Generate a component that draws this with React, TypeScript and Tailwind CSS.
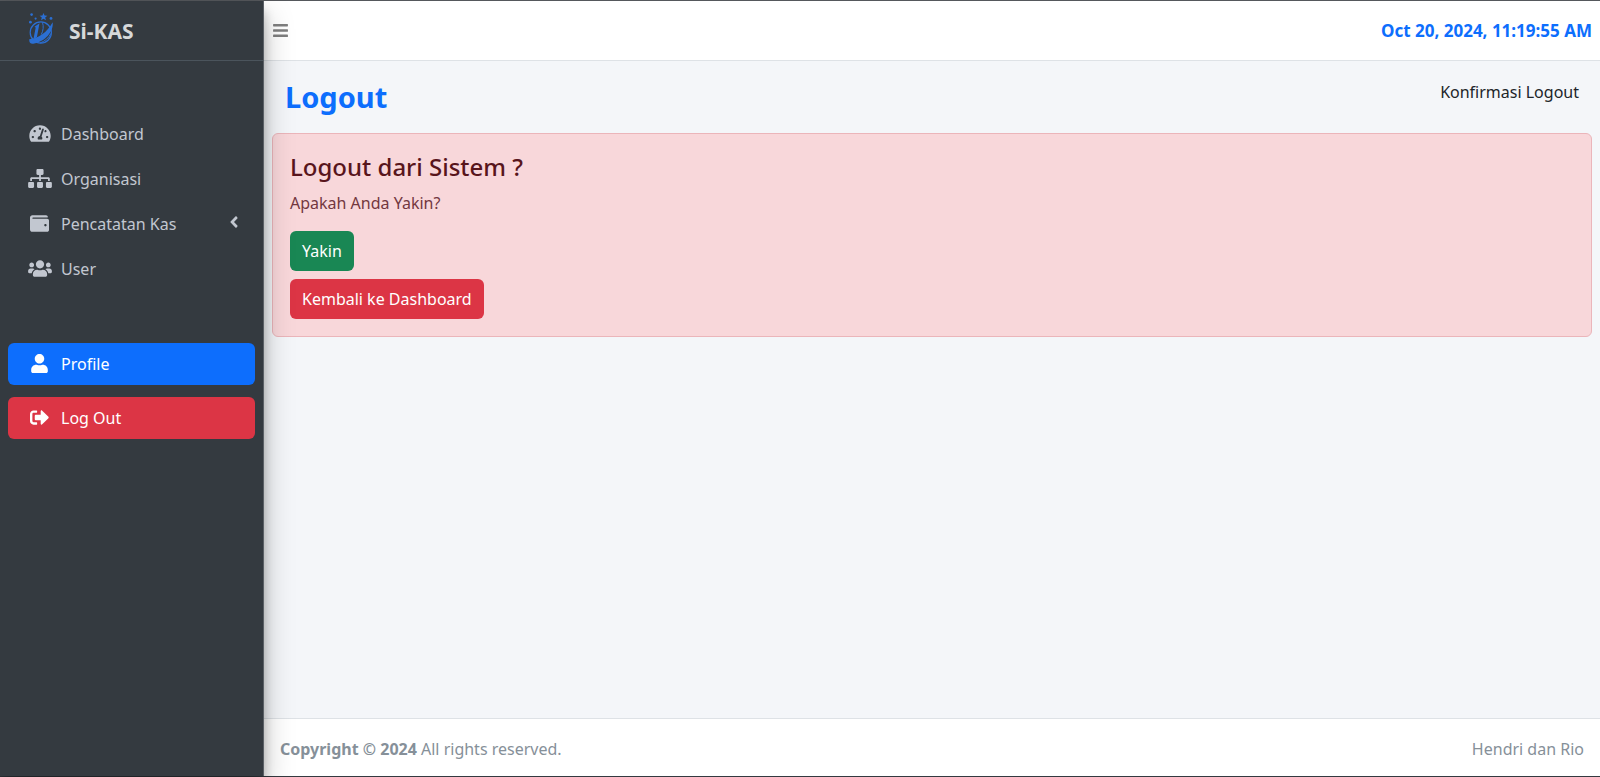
import type { ReactNode } from "react";
import {
  FaAngleLeft,
  FaBars,
  FaSignOutAlt,
  FaSitemap,
  FaTachometerAlt,
  FaUser,
  FaUsers,
  FaWallet,
} from "react-icons/fa";

function Logo() {
  return (
    <svg viewBox="0 0 28 34" className="h-[34px] w-7" fill="none" aria-hidden="true">
      <g fill="#2b6fd3">
        <path d="M15.500 1l1.100 2.500 2.800.2-2.200 1.800.8 2.800-2.500-1.500-2.500 1.500.8-2.800-2.200-1.800 2.800-.2z" />
        <circle cx="3.600" cy="2.600" r="1.300" />
        <circle cx="7.600" cy="6.600" r="1.100" />
        <circle cx="2.400" cy="10.200" r="1.400" />
        <circle cx="23" cy="6.400" r="1.400" />
        <path d="M6.500 14.800l5-3.600-2.600 14.100-3.500 1.900 2.300-11.600z" />
        <path d="M1.200 27.200c9-.5 18-7 23.500-17 1 9-7.200 19.500-19.500 21.500-2.700.2-4.200-1.200-4-4.500z" />
      </g>
      <circle cx="12.800" cy="20.500" r="10.600" stroke="#2b6fd3" strokeWidth="1.200" />
      <path d="M14.500 10.500c1.300 4 .8 8-1.200 12M12 31c4.500-1.500 9-5 10.800-9.500" stroke="#2b6fd3" />
    </svg>
  );
}

type NavItemProps = {
  icon: ReactNode;
  label: string;
  tone?: string;
  trailing?: ReactNode;
};

function NavItem({ icon, label, tone = "text-[#c2c7d0]", trailing }: NavItemProps) {
  return (
    <a href="#" className={`flex h-[42px] items-center rounded-md pr-3 pl-[18px] ${tone}`}>
      <span className="flex w-[27px] justify-center pb-0.5">{icon}</span>
      <span className="ml-2 flex-1">{label}</span>
      {trailing}
    </a>
  );
}

export default function App() {
  return (
    <div className="flex min-h-screen border-t border-b border-t-[#55585c] border-b-[#343a40] bg-[#f4f6f9] font-['Noto_Sans',sans-serif] text-[16px] leading-[26px] text-[#212529]">
      <aside className="z-10 flex w-[264px] shrink-0 flex-col border-r border-[#5b6066] bg-[#343a40] shadow-[0_14px_28px_rgba(0,0,0,0.25),0_10px_10px_rgba(0,0,0,0.22)]">
        <a href="#" className="flex h-[60px] items-center gap-[13px] border-b border-[#4b545c] pb-1 pl-7 text-[21px] font-bold text-[#d6d8d9]">
          <Logo />
          <span className="pt-1">Si-KAS</span>
        </a>
        <nav className="flex flex-col px-2 pt-[52px]">
          <div className="flex flex-col gap-[3px]">
            <NavItem icon={<FaTachometerAlt className="h-[19px] w-[22px]" />} label="Dashboard" />
            <NavItem icon={<FaSitemap className="h-[19px] w-6" />} label="Organisasi" />
            <NavItem
              icon={<FaWallet className="size-[19px]" />}
              label="Pencatatan Kas"
              trailing={<FaAngleLeft className="mb-1 text-[18px]" />}
            />
            <NavItem icon={<FaUsers className="h-[19px] w-6" />} label="User" />
          </div>
          <div className="mt-[53px] flex flex-col gap-3">
            <NavItem icon={<FaUser className="size-[19px]" />} label="Profile" tone="bg-[#0d6efd] text-white" />
            <NavItem icon={<FaSignOutAlt className="size-[19px]" />} label="Log Out" tone="bg-[#dc3545] text-white" />
          </div>
        </nav>
      </aside>

      <div className="flex min-w-0 flex-1 flex-col">
        <header className="flex h-[60px] items-center justify-between border-b border-[#dee2e6] bg-white px-2">
          <button type="button" aria-label="Menu" className="text-[#7f7f7f]">
            <FaBars className="size-[17px]" />
          </button>
          <time className="text-[17px] font-bold text-[#0d6efd]">Oct 20, 2024, 11:19:55 AM</time>
        </header>

        <main className="flex-1 px-2">
          <div className="flex items-start justify-between px-[13px] pt-[18px] pb-[18px]">
            <h1 className="text-[29px] leading-[36px] font-bold text-[#0d6efd]">Logout</h1>
            <span>Konfirmasi Logout</span>
          </div>
          <section className="flex flex-col items-start rounded-md border border-[#ebb5ba] bg-[#f8d7da] px-[17px] pt-4 pb-[17px]">
            <h2 className="text-[24px] leading-[34px] font-medium text-[#58151c]">Logout dari Sistem ?</h2>
            <p className="mt-1.5 text-[#73383f]">Apakah Anda Yakin?</p>
            <button type="button" className="mt-[15px] h-10 rounded-md bg-[#198754] px-3 text-white">
              Yakin
            </button>
            <button type="button" className="mt-2 h-10 rounded-md bg-[#dc3545] px-3 text-white">
              Kembali ke Dashboard
            </button>
          </section>
        </main>

        <footer className="flex h-[58px] items-center justify-between border-t border-[#dee2e6] bg-white px-4 pt-[2px] text-[#869099]">
          <span>
            <strong>Copyright © 2024</strong> All rights reserved.
          </span>
          <span>Hendri dan Rio</span>
        </footer>
      </div>
    </div>
  );
}
